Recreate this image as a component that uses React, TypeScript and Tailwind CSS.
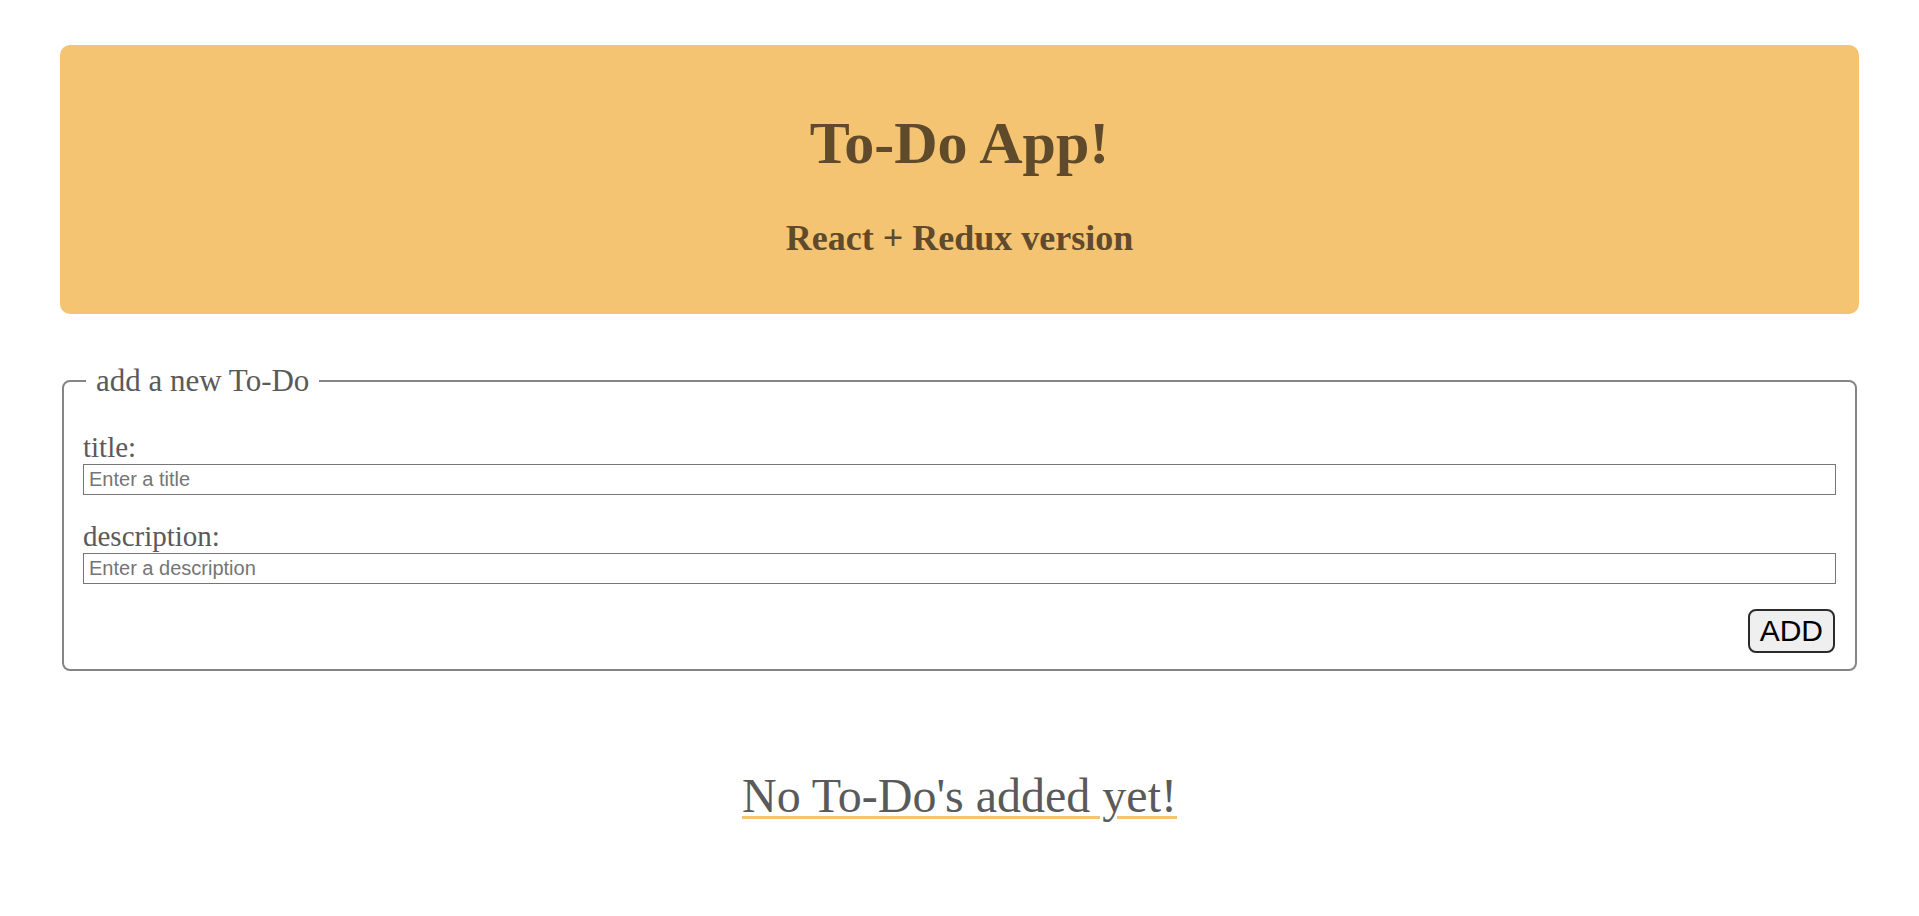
import React from 'react';

const serif = "font-['Liberation_Serif','Times_New_Roman',serif]";
const sans = "font-['Liberation_Sans',Arial,sans-serif]";

function Header() {
  return (
    <header className={`${serif} flex h-[269px] flex-col items-center rounded-[10px] bg-[#f4c472] pt-[68px] text-[#5f4a2c]`}>
      <h1 className="text-[60px] font-bold leading-none">To-Do App!</h1>
      <h2 className="mt-[47px] text-[36px] font-bold leading-none">React + Redux version</h2>
    </header>
  );
}

function Field({ label, placeholder, first }: { label: string; placeholder: string; first?: boolean }) {
  return (
    <div className={first ? '' : 'mt-[25px]'}>
      <label className="block text-[29px] leading-[33px]">{label}</label>
      <input
        type="text"
        placeholder={placeholder}
        className={`${sans} block h-[31px] w-full border border-[#767676] px-[5px] text-[20px] text-black placeholder:text-[#757575]`}
      />
    </div>
  );
}

function NewTodoForm() {
  return (
    <fieldset className={`${serif} mx-[2px] mt-[49px] rounded-[8px] border-2 border-[#858585] px-[19px] pb-[16px] pt-[33px] text-[#5a5a5a]`}>
      <legend className="ml-[3px] px-[10px] text-[31px] leading-[35px]">add a new To-Do</legend>
      <Field first label="title:" placeholder="Enter a title" />
      <Field label="description:" placeholder="Enter a description" />
      <div className="mt-[25px] flex justify-end">
        <button className={`${sans} mr-[1px] h-[44px] rounded-[8px] border-2 border-[#2b2b2b] bg-[#efefef] px-[10px] text-[30px] leading-none text-black`}>
          ADD
        </button>
      </div>
    </fieldset>
  );
}

export default function App() {
  return (
    <div className="min-h-screen bg-white px-[60px] pt-[45px]">
      <Header />
      <NewTodoForm />
      <p className={`${serif} mt-[97px] text-center text-[48px] leading-[55px] text-[#5a5a5a]`}>
        <span className="underline decoration-[#f4c472] decoration-[3px] underline-offset-[4px]">No To-Do's added yet!</span>
      </p>
    </div>
  );
}
